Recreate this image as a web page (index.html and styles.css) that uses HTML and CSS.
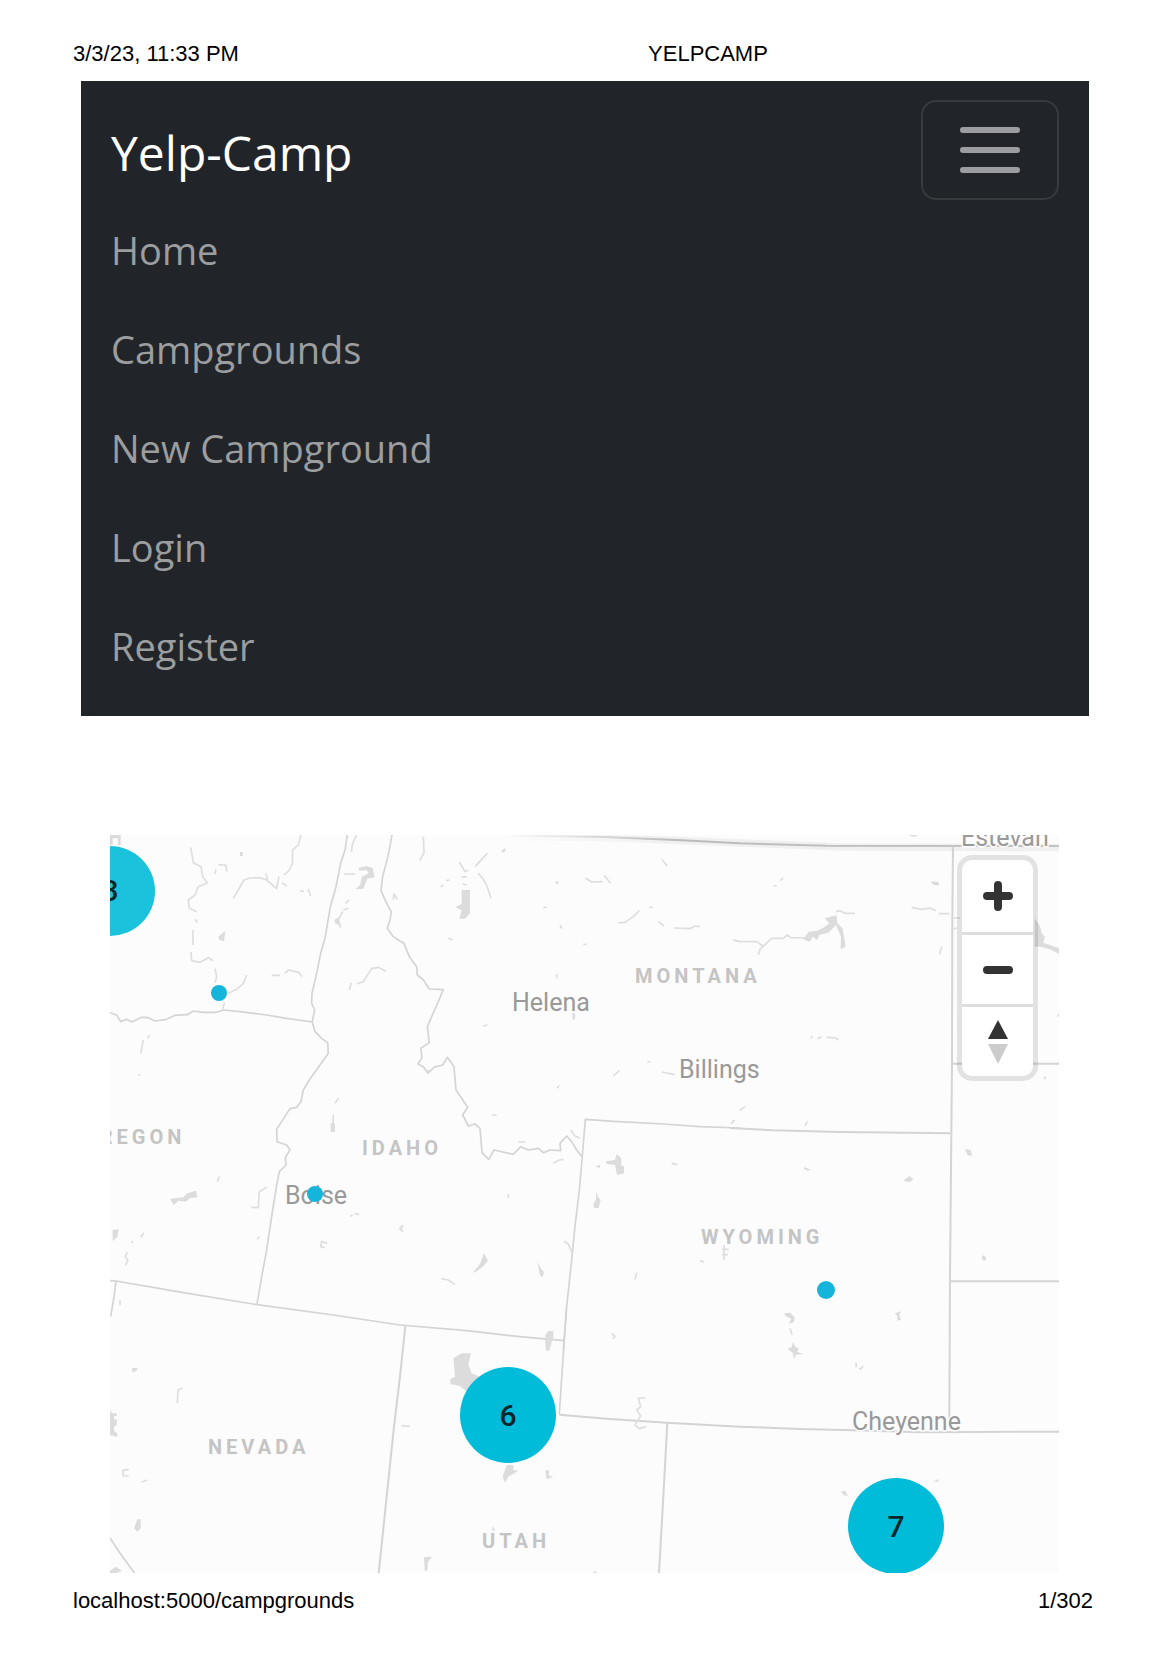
FILE: index.html
```html
<!DOCTYPE html>
<html lang="en">
<head>
<meta charset="utf-8">
<meta name="viewport" content="width=device-width, initial-scale=1">
<title>YELPCAMP</title>
<link rel="stylesheet" href="styles.css">
</head>
<body>
<header class="sheet-line sheet-head">
  <span>3/3/23, 11:33 PM</span>
  <span class="sheet-title">YELPCAMP</span>
</header>

<nav class="navbar">
  <div class="navbar-top">
    <a class="brand" href="#">Yelp-Camp</a>
    <button class="toggler" type="button" aria-label="Toggle navigation">
      <span class="bar"></span><span class="bar"></span><span class="bar"></span>
    </button>
  </div>
  <ul class="nav-list">
    <li><a class="nav-link" href="#">Home</a></li>
    <li><a class="nav-link" href="#">Campgrounds</a></li>
    <li><a class="nav-link" href="#">New Campground</a></li>
    <li><a class="nav-link" href="#">Login</a></li>
    <li><a class="nav-link" href="#">Register</a></li>
  </ul>
</nav>

<main class="map">
  <svg class="map-canvas" viewBox="0 0 949 738" role="img" aria-label="Campground cluster map">
    <defs>
      <linearGradient id="haze" x1="0" x2="1" y1="0" y2="0">
        <stop offset="0" stop-color="#ccc" stop-opacity="0"/>
        <stop offset=".3" stop-color="#bbb"/>
        <stop offset="1" stop-color="#c4c4c4"/>
      </linearGradient>
      <linearGradient id="haze-soft" x1="0" x2="1" y1="0" y2="0">
        <stop offset="0" stop-color="#f0f0f0" stop-opacity="0"/>
        <stop offset=".3" stop-color="#f0f0f0"/>
        <stop offset="1" stop-color="#f0f0f0"/>
      </linearGradient>
    </defs>
    <g transform="scale(.33333)">
      <!-- north-west: Washington, northern Idaho -->
      <g transform="translate(-30 -45)">
        <path class="border" d="M742 45 735 90 722 130 708 200 690 265 676 350 662 400 650 460 636 520 635 550 644 570 637 605M30 578 50 585 62 605 80 598 95 606 125 592 145 593 165 603 200 598 225 586 262 584 280 573 310 577 350 577 370 570 420 575 500 585 560 595 637 606 645 635 665 655 683 668 685 700 660 735 628 780"/>
        <path class="border" d="M876 45 866 100 848 170 843 212 860 250 874 275 870 300 862 325 880 350 900 363"/>
        <path class="river" d="M272 82 280 128 303 140 308 170 322 188 295 200 285 225 265 240 268 265 290 275M285 298 292 308M279 330V375M273 396 275 422 300 427 325 413 340 422M345 446 350 470 345 488M440 465 430 490 410 508 385 520M374 548 368 566M400 235 415 210 432 180 450 174 480 173 500 180 530 206 537 170M498 160 503 182M603 45 595 75 578 90 577 130 568 150 552 165M345 162 348 148M355 134 378 136 380 155M515 466 540 466 M555 460 565 450 598 458 605 470M748 510 754 488M770 492 790 485 815 446 835 442 858 454M770 45 758 70 754 96M732 162H765M730 270 745 265M748 240 736 250M728 275 715 300 722 325M970 50 972 98 960 122M148 645 143 655M130 660 122 700M880 240 882 222 892 238M600 213 612 214M624 206 632 228M545 188 560 198"/>
        <path class="lake" d="M776 144 800 138 818 144 824 172 802 176 790 206 766 208 780 196 785 170 806 160 800 150 778 152ZM355 350 376 332 372 364 358 360ZM703 300 715 292 722 318 705 310ZM420 96H428V108H420ZM30 45H62V75H54V55H38V75H30Z"/>
      </g>
      <!-- Montana and its border with Idaho -->
      <g transform="translate(870 -45)">
        <path class="border" d="M0 363 12 370 28 410 50 440 52 465 70 480 88 507 130 509 115 545 95 590 82 620 88 668 62 685 66 712 54 732 70 740 84 760 102 742 128 735 142 712 162 740 168 810 185 835 203 862 188 885 205 918 225 912 240 925 246 998 266 1018 282 990 340 1003 362 980 385 990 415 985 430 998 450 990 482 992 480 970 500 948 515 965 530 990 546 1010"/>
        <path class="border" d="M546 1020 556 898 640 904 790 912 900 920 1020 924"/>
        <path class="river" d="M178 126 195 155 205 150M225 140 262 100M235 160 250 178 262 200 273 235M185 172 200 170M188 192 200 195M122 200 130 196M138 182 148 180M556 174 575 186 608 185M612 166 632 190M655 308 675 307 700 290 718 272M775 304 792 318M822 324 870 326 885 318 900 320M748 262H758M430 262H440M480 315 486 326M1000 360 1020 366M145 354 158 360M640 768 658 752M742 726H752M786 756 825 764M250 618 262 615M275 885H290M550 373H560M785 118 802 138M998 908 1003 900M460 1030 478 1020 490 1018M355 966H375M512 930 525 948 540 955M815 1030 832 1034M470 462V475"/>
        <path class="lake" d="M185 210H210V280L195 296H178L185 270 166 262 185 252ZM304 92 316 84 316 94 306 98ZM464 186 476 184 474 195ZM470 800 480 794 474 808ZM518 570 526 585 524 600 517 598ZM618 1024 645 1020 650 1002 664 1015 664 1035 670 1060H650L645 1035 620 1032ZM585 1040 600 1034 600 1043Z"/>
      </g>
      <!-- Canadian border -->
      <path class="frontier-haze" d="M1180 5 1480 8 1900 24 2200 36 2847 38"/>
      <path class="frontier" d="M1180 1 1480 6 1700 15 1890 25 2150 32 2847 33"/>
      <!-- eastern Montana and the Dakotas -->
      <g transform="translate(1860 -45)">
        <path class="border strong" d="M669 80 667 300 666 730 663 1050M666 731H987"/>
        <path class="border strong" d="M0 924 130 931 330 936 660 940"/>
        <path class="river" d="M10 360 30 364 80 365 98 378 M85 405 90 388 125 355 160 355 172 345 182 353 240 354 M318 275 330 272 345 280H375M545 262 575 268 600 264 618 272M626 281H658M668 294H690M672 325H680M628 403 636 380M130 198H140M150 182 160 174M242 655 248 648M262 656 275 650M290 652 318 654 326 660M225 918 232 904M28 872 45 860M3 912 12 900M540 46 560 48M222 1044 235 1050M985 582V590"/>
        <path class="lake" d="M220 358 236 335 262 332 285 320 298 310 284 295 320 286 322 310 338 325 347 380 332 388 333 350 318 315 295 338 268 345 262 360 248 350 240 365ZM602 184 625 186 628 197 610 194ZM914 295 930 318 935 340 945 350 940 368 987 385V402L960 388 930 380 914 380ZM706 988 722 992 725 1006 712 1004ZM940 770 950 770 944 780Z"/>
      </g>
      <!-- Oregon and southern Idaho -->
      <g transform="translate(-30 705)">
        <path class="border" d="M628 30 610 60 603 95 590 112 570 116 530 178 531 215 560 225 570 240 556 262 558 285 538 305 530 345 518 420 500 540 485 620 471 703"/>
        <path class="border" d="M30 632 48 633 250 668 471 704 700 735 880 762 900 765M48 633 42 680 32 740"/>
        <path class="river" d="M454 412 475 413 478 365 500 352M352 335 358 320M700 135 698 185M705 100 716 85M750 440 758 434M764 430 778 434M682 520 665 515 662 530 675 533M910 468 900 475 908 484M122 502 132 488M82 546 76 560 84 572 76 585M97 520V512M60 690V706M472 508 477 500M118 12V18"/>
        <path class="lake" d="M210 388 228 384 250 382 262 370 288 362 292 382 270 384 258 395 235 392 222 405ZM38 480 56 478 52 500 38 514ZM692 160H705V185H692ZM975 0H995L985 12Z"/>
      </g>
      <!-- Wyoming west, Idaho east -->
      <g transform="translate(870 825)">
        <path class="border" d="M546 150 538 240 525 350 515 450 500 590 490 720"/>
        <path class="border" d="M0 645 200 662 360 680 492 692"/>
        <path class="river" d="M124 506 145 510 165 524M492 394 505 402 517 430M705 508 710 488M900 452 912 456M636 670 645 680 638 686M325 252V264M8 345 0 356 8 365M972 405V450M966 418H986M966 434H984"/>
        <path class="lake" d="M218 488 240 462 252 430 264 452 248 470 230 484ZM412 456 426 480 432 485 428 502 420 496ZM588 245 595 262 602 270 596 294H582L580 282 588 270ZM436 675 445 662 460 664V690L455 695 448 722H438L436 700ZM648 168H672V190L652 195Z"/>
      </g>
      <!-- Wyoming east, South Dakota, Nebraska -->
      <g transform="translate(1860 825)">
        <path class="border strong" d="M663 180 660 500 658 930M660 514H987"/>
        <path class="river" d="M222 174 240 180M180 655 186 675"/>
        <path class="lake" d="M520 212 538 198 550 208 540 216ZM706 118 722 120 726 138 714 136ZM754 442 762 435 770 446 762 454ZM163 610 180 608 194 622 192 636 176 642 184 626 166 618ZM494 610 514 604 508 615 513 630 502 632 502 618ZM173 716 186 710 188 696 196 710 206 716 202 726 220 732 198 734 192 748 188 728ZM376 758H381V772H376ZM385 776 406 764 392 780Z"/>
      </g>
      <!-- Nevada -->
      <g transform="translate(-30 1425)">
        <path class="border strong" d="M916 48 900 200 882 350 860 560 836 790"/>
        <path class="border" d="M30 684 60 730 104 790"/>
        <path class="river" d="M248 234 234 240 232 280M86 478 68 482 70 498 86 498M125 516 142 510M905 347 930 349"/>
        <path class="lake" d="M96 174H112V180L98 188ZM30 300 36 310 50 310V318H42V328H50V345L42 350V362L52 370V380L30 376ZM112 628H122V655L112 665 102 655ZM30 782 48 770 66 782 50 789H30ZM972 742 996 740 984 755 982 782H974Z"/>
      </g>
      <!-- Utah and Colorado -->
      <g transform="translate(870 1425)">
        <path class="border" d="M499 0 488 160 478 312"/>
        <path class="border strong" d="M478 314 620 326 800 338 1020 350 1200 357 1360 361 1560 367 1977 365M802 338 790 560 777 790"/>
        <path class="river" d="M735 264 715 264 722 290 710 300 722 318 705 345 718 356 738 350M278 652 282 664M580 787H590"/>
        <path class="lake" d="M160 145 185 130H213L205 165 215 190 240 200 200 245 180 228 152 222 150 208 165 200ZM320 465H340L340 480 355 482 325 500 315 518 308 500ZM436 482 448 480 446 496 460 500 440 508ZM1323 545 1335 542 1344 558 1332 556ZM1600 515 1615 507 1616 515Z"/>
      </g>
    </g>

    <g class="state">
      <text x="525" y="148">MONTANA</text>
      <text x="252" y="320">IDAHO</text>
      <text x="-28" y="309">OREGON</text>
      <text x="591" y="409">WYOMING</text>
      <text x="98" y="619">NEVADA</text>
      <text x="372" y="713">UTAH</text>
    </g>
    <g class="city">
      <text x="402" y="176">Helena</text>
      <text x="569" y="243">Billings</text>
      <text x="175" y="369">Boise</text>
      <text x="742" y="595">Cheyenne</text>
      <text x="851" y="11">Estevan</text>
    </g>

    <g class="point">
      <circle cx="109" cy="158" r="8"/>
      <circle cx="205" cy="359" r="8"/>
      <circle cx="716" cy="455" r="9"/>
    </g>
    <g class="cluster">
      <circle class="faded" cx="0" cy="56" r="45"/>
      <circle cx="398" cy="580" r="48"/>
      <circle cx="786" cy="691" r="48"/>
      <text x="0" y="66">3</text>
      <text x="398" y="591">6</text>
      <text x="786" y="702">7</text>
    </g>
  </svg>

  <div class="controls">
    <button class="control" type="button" aria-label="Zoom in">
      <svg width="30" height="30" viewBox="0 0 30 30"><path class="stroke" d="M15 4V26M4 15H26"/></svg>
    </button>
    <button class="control" type="button" aria-label="Zoom out">
      <svg width="30" height="30" viewBox="0 0 30 30"><path class="stroke" d="M4 15H26"/></svg>
    </button>
    <button class="control" type="button" aria-label="Reset bearing to north">
      <svg width="20" height="44" viewBox="0 0 20 44"><path fill="#333" d="M10 0 20 19H0Z"/><path fill="#ccc" d="M10 44 20 24H0Z"/></svg>
    </button>
  </div>
</main>

<footer class="sheet-line">
  <span>localhost:5000/campgrounds</span>
  <span>1/302</span>
</footer>
</body>
</html>
```
FILE: styles.css
```css
* {
  box-sizing: border-box;
}

body {
  margin: 0;
  padding: 42px 78px 43px 81px;
  background: #fff;
  color: #000;
  font-family: "Liberation Sans", Arial, sans-serif;
}

/* running header and footer of the printed sheet */
.sheet-line {
  display: flex;
  justify-content: space-between;
  margin: 0 -4px 0 -8px;
  font-size: 22px;
  line-height: 24px;
}

.sheet-head {
  gap: 84px;
}

.sheet-title {
  flex: 1;
  text-align: center;
}

/* navigation */
.navbar {
  margin-top: 15px;
  padding: 19px 30px 20px;
  background: #212529;
  font-family: "Open Sans", "Noto Sans", sans-serif;
}

.navbar-top {
  display: flex;
  align-items: center;
  justify-content: space-between;
}

.brand {
  padding-top: 5px;
  color: #fff;
  font-size: 48px;
  line-height: 72px;
  text-decoration: none;
}

.toggler {
  display: flex;
  flex-direction: column;
  align-items: center;
  justify-content: center;
  gap: 14px;
  width: 138px;
  height: 100px;
  padding: 0;
  border: 2px solid #373b3e;
  border-radius: 15px;
  background: transparent;
}

.bar {
  width: 60px;
  height: 6px;
  border-radius: 3px;
  background: #9b9da0;
}

.nav-list {
  margin: 0;
  padding: 1px 0 0;
  list-style: none;
}

.nav-link {
  display: block;
  color: #9b9d9f;
  font-size: 38px;
  line-height: 99px;
  text-decoration: none;
}

/* cluster map */
.map {
  position: relative;
  margin: 119px 30px 16px 29px;
  background: #fcfcfc;
}

.map-canvas {
  display: block;
  width: 100%;
  height: auto;
  font-family: Roboto, sans-serif;
}

.border,
.river,
.frontier,
.frontier-haze {
  fill: none;
  stroke-linejoin: round;
}

.border {
  stroke: #d4d4d4;
  stroke-width: 5;
}

.strong {
  stroke-width: 6;
}

.river {
  stroke: #dedede;
  stroke-width: 5;
}

.lake {
  fill: #dcdcdc;
}

.frontier {
  stroke: url(#haze);
  stroke-width: 6;
}

.frontier-haze {
  stroke: url(#haze-soft);
  stroke-width: 22;
}

.state {
  fill: #c4c4c4;
  font-size: 20px;
  font-weight: 700;
  letter-spacing: 4px;
}

.city {
  fill: #999;
  stroke: #fcfcfc;
  stroke-width: 3px;
  paint-order: stroke;
  font-size: 25px;
}

.point {
  fill: #14b4db;
}

.cluster {
  fill: #00bcd8;
}

.cluster .faded {
  fill: #1ac2db;
}

.cluster text {
  fill: #08272c;
  font-size: 30px;
  font-weight: 500;
  text-anchor: middle;
}

.controls {
  position: absolute;
  top: 20px;
  right: 21px;
  width: 81px;
  border: 5px solid rgba(0, 0, 0, 0.1);
  border-radius: 15px;
  background: #fff;
  background-clip: padding-box;
}

.control {
  display: flex;
  align-items: center;
  justify-content: center;
  width: 100%;
  height: 72px;
  padding: 0;
  border: 0;
  background: transparent;
}

.control + .control {
  border-top: 3px solid #ddd;
}

.stroke {
  fill: none;
  stroke: #333;
  stroke-width: 8;
  stroke-linecap: round;
}
```
